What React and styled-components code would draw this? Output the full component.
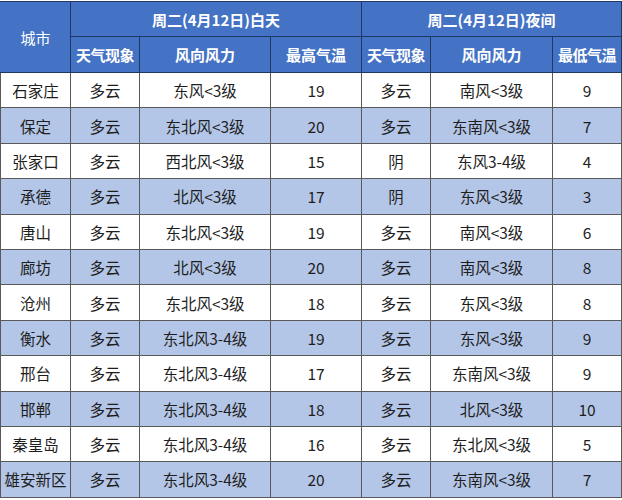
import React from 'react';
import styled, { createGlobalStyle } from 'styled-components';

const GlobalStyle = createGlobalStyle`
  html, body {
    margin: 0;
    padding: 0;
    background: #ffffff;
  }
  body {
    font-family: "Noto Sans CJK SC", "Liberation Sans", sans-serif;
  }
`;

const Table = styled.table`
  border-collapse: collapse;
  table-layout: fixed;
  width: 621px;
  margin-top: 1px;
  font-size: 15.5px;
  color: #1e1e1e;
`;

const Head = styled.th`
  background: #4472c4;
  color: #ffffff;
  font-weight: ${p => (p.$light ? 400 : 700)};
  font-size: 15px;
  text-align: center;
  padding: 0;
  height: ${p => p.$h || 35}px;
  border: 1px solid #1f3864;
  border-left-color: ${p => (p.$edge ? '#4472c4' : '#1f3864')};
  white-space: nowrap;
  letter-spacing: ${p => (p.$tight ? '-0.5px' : '0')};
`;

const Row = styled.tr`
  background: ${p => (p.$alt ? '#b4c6e7' : '#ffffff')};
`;

const Cell = styled.td`
  text-align: center;
  padding: 0;
  height: 34.4px;
  border: 1px solid #595959;
  white-space: nowrap;
`;

const widths = [70, 69, 131, 91, 69, 122, 69];

const rows = [
  ['石家庄', '多云', '东风<3级', '19', '多云', '南风<3级', '9'],
  ['保定', '多云', '东北风<3级', '20', '多云', '东南风<3级', '7'],
  ['张家口', '多云', '西北风<3级', '15', '阴', '东风3-4级', '4'],
  ['承德', '多云', '北风<3级', '17', '阴', '东风<3级', '3'],
  ['唐山', '多云', '东北风<3级', '19', '多云', '南风<3级', '6'],
  ['廊坊', '多云', '北风<3级', '20', '多云', '南风<3级', '8'],
  ['沧州', '多云', '东北风<3级', '18', '多云', '东风<3级', '8'],
  ['衡水', '多云', '东北风3-4级', '19', '多云', '东风<3级', '9'],
  ['邢台', '多云', '东北风3-4级', '17', '多云', '东南风<3级', '9'],
  ['邯郸', '多云', '东北风3-4级', '18', '多云', '北风<3级', '10'],
  ['秦皇岛', '多云', '东北风3-4级', '16', '多云', '东北风<3级', '5'],
  ['雄安新区', '多云', '东北风3-4级', '20', '多云', '东南风<3级', '7'],
];

const App = () => (
  <>
    <GlobalStyle />
    <Table>
      <colgroup>
        {widths.map((w, i) => (
          <col key={i} style={{ width: w }} />
        ))}
      </colgroup>
      <thead>
        <tr>
          <Head rowSpan={2} $light $edge>城市</Head>
          <Head colSpan={3} $h={34}>周二(4月12日)白天</Head>
          <Head colSpan={3} $h={34}>周二(4月12日)夜间</Head>
        </tr>
        <tr>
          <Head $tight>天气现象</Head>
          <Head>风向风力</Head>
          <Head>最高气温</Head>
          <Head $tight>天气现象</Head>
          <Head>风向风力</Head>
          <Head $tight>最低气温</Head>
        </tr>
      </thead>
      <tbody>
        {rows.map((r, i) => (
          <Row key={r[0]} $alt={i % 2 === 1}>
            {r.map((c, j) => (
              <Cell key={j}>{c}</Cell>
            ))}
          </Row>
        ))}
      </tbody>
    </Table>
  </>
);

export default App;
